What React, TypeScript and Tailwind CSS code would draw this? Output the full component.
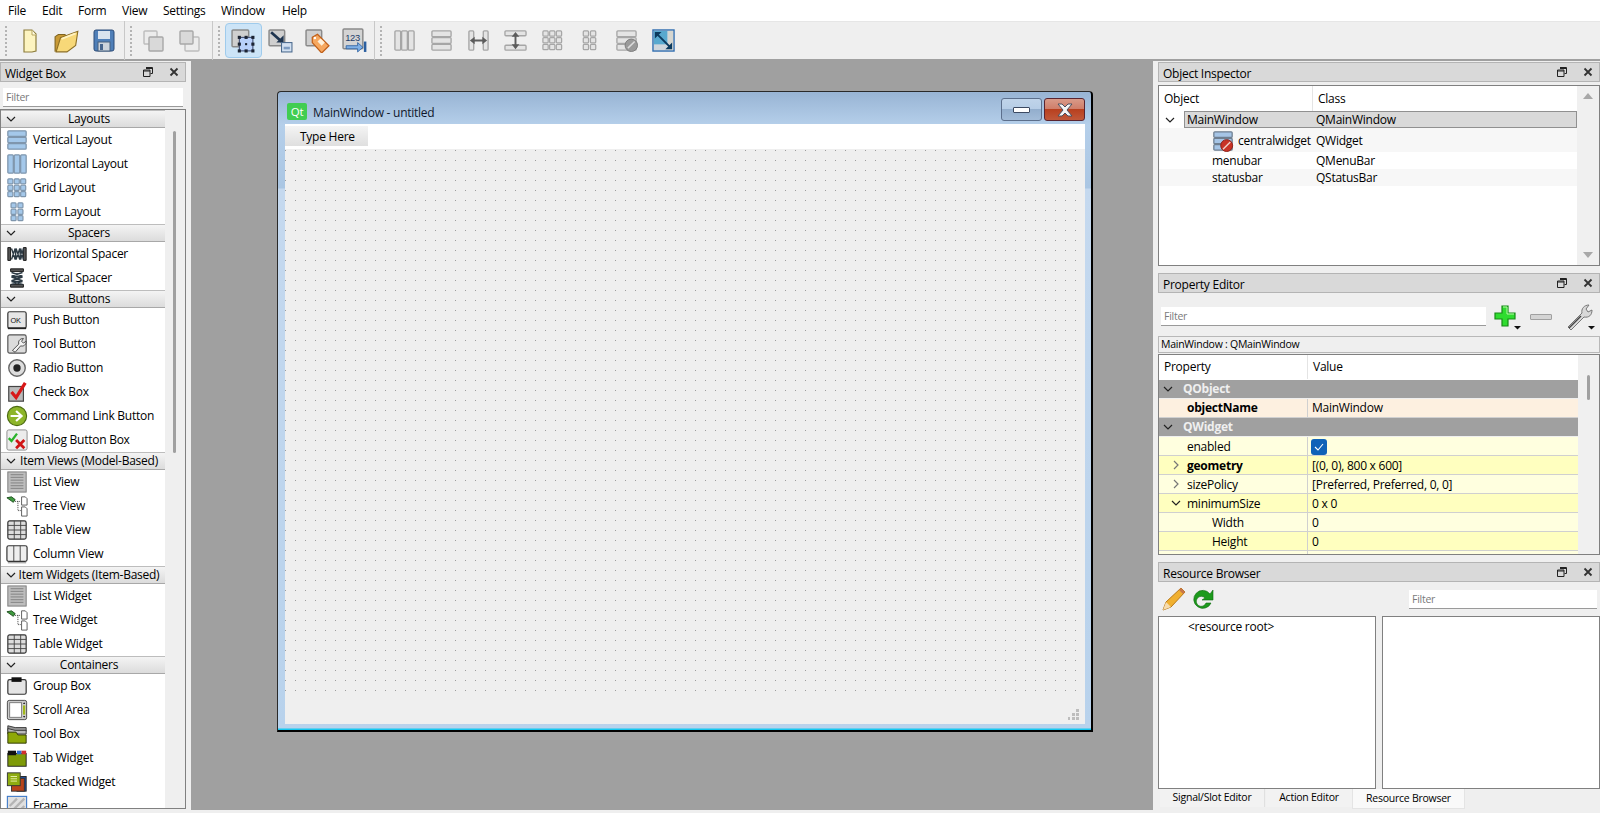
import type { ReactNode } from 'react'

function Ico({ s = 22, children, className = '' }: { s?: number; children: ReactNode; className?: string }) {
  return (
    <svg width={s} height={s} viewBox="0 0 24 24" className={`shrink-0 ${className}`}>
      {children}
    </svg>
  )
}

const BLUE = { f: '#a4c8ea', s: '#7f96ad' }
const GRAY = { f: '#e4e4e4', s: '#a6a6a6' }

function VBars({ f, s }: { f: string; s: string }) {
  return (
    <>
      {[2, 9, 16].map((y) => (
        <rect key={y} x="2" y={y} width="20" height="6" rx="1" fill={f} stroke={s} strokeWidth="1.4" />
      ))}
    </>
  )
}
function HBars({ f, s }: { f: string; s: string }) {
  return (
    <>
      {[2, 9, 16].map((x) => (
        <rect key={x} x={x} y="2" width="6" height="20" rx="1" fill={f} stroke={s} strokeWidth="1.4" />
      ))}
    </>
  )
}
function Cells({ f, s, cols }: { f: string; s: string; cols: number[] }) {
  return (
    <>
      {cols.map((x) =>
        [2, 9, 16].map((y) => (
          <rect key={`${x}-${y}`} x={x} y={y} width="5.5" height="5.5" rx="1" fill={f} stroke={s} strokeWidth="1.3" />
        ))
      )}
    </>
  )
}

function Sq({ x, y, w = 15, f = '#cfcfcf', s = '#8a8a8a' }: { x: number; y: number; w?: number; f?: string; s?: string }) {
  return <rect x={x} y={y} width={w} height={w} fill={f} stroke={s} strokeWidth="1.4" rx="1" />
}

const toolbarA = [
  <Ico key="new" s={24}>
    <path d="M6 1h8l4 4v17l-4 1H6z" fill="#fdf4c0" stroke="#8d7d3c" strokeWidth="1.2" />
    <path d="M14 1v5h4" fill="#fffbe4" stroke="#b9a860" />
  </Ico>,
  <Ico key="open" s={26}>
    <path d="M1 22V8l3-2h6l2 2h7v4" fill="#c99a35" stroke="#7f6420" />
    <path d="M2 22l4-13 16-6-2 13-8 6z" fill="#f7d878" stroke="#8c6e24" />
    <path d="M7 10l13-5" stroke="#fff2c0" strokeWidth="1.6" />
  </Ico>,
  <Ico key="save" s={24}>
    <rect x="2" y="1" width="20" height="21" rx="2" fill="#4f7fb8" stroke="#2c4c78" />
    <rect x="6" y="2" width="12" height="8" fill="#d9e3ee" />
    <rect x="6" y="13" width="12" height="9" fill="#ccd3db" stroke="#47607f" />
    <rect x="8" y="15" width="3" height="6" fill="#46648c" />
  </Ico>,
]

const toolbarB = [
  <Ico key="b" s={24}>
    <Sq x={2} y={2} w={13} f="#ececec" s="#bdbdbd" />
    <Sq x={7} y={8} w={14} f="#d9d9d9" s="#a8a8a8" />
  </Ico>,
  <Ico key="f" s={24}>
    <Sq x={7} y={8} w={14} f="#ececec" s="#bdbdbd" />
    <Sq x={2} y={2} w={13} f="#d9d9d9" s="#a8a8a8" />
  </Ico>,
]

const toolbarC = [
  <Ico key="edit" s={25}>
    <Sq x={1} y={2} w={16} />
    <rect x="8" y="9" width="13" height="13" fill="#b8d0fa" stroke="#3c4a70" />
    {[[6.5, 7.5], [19.5, 7.5], [6.5, 20.5], [19.5, 20.5], [13, 7.5], [6.5, 14], [19.5, 14], [13, 20.5]].map(([x, y]) => (
      <rect key={`${x}-${y}`} x={x} y={y} width="3" height="3" fill="#1c2433" />
    ))}
    <rect x="13.5" y="14.5" width="2" height="2" fill="#1c2433" />
  </Ico>,
  <Ico key="sig" s={25}>
    <Sq x={1} y={2} w={15} />
    <path d="M3 4l10 9" stroke="#1f3550" strokeWidth="2.6" />
    <path d="M8 14h7V7z" fill="#1f3550" />
    <rect x="13" y="14" width="10" height="9" fill="#d3e1f2" stroke="#48688c" />
    <rect x="15" y="18" width="6" height="2.5" fill="#7d9cc2" />
  </Ico>,
  <Ico key="bud" s={25}>
    <Sq x={1} y={2} w={15} />
    <path d="M7 9l5-3 11 11-7 7L7 14z" fill="#f6a860" stroke="#c05f18" strokeWidth="1.2" />
    <path d="M12 13l4 4 3-3-4-4z" fill="#fff1dc" />
    <circle cx="9.5" cy="9.5" r="1.2" fill="#fff" />
  </Ico>,
  <Ico key="tab" s={25}>
    <Sq x={1} y={1} w={19} f="#d4d4d4" />
    <text x="3" y="12" fontSize="9" fontFamily="Liberation Sans" fill="#1e3c68">123</text>
    <path d="M4 17h11v-3l5 4.500-5 4.500v-3H4z" fill="#7fb0e6" stroke="#2b5fa0" strokeWidth=".8" />
    <rect x="21" y="13" width="2.400" height="10" fill="#2b5fa0" />
  </Ico>,
]

const toolbarD = [
  <Ico key="hl" s={23}><HBars {...GRAY} /></Ico>,
  <Ico key="vl" s={23}><VBars {...GRAY} /></Ico>,
  <Ico key="hs" s={23}>
    <rect x="2" y="2" width="5" height="20" rx="1" fill={GRAY.f} stroke={GRAY.s} strokeWidth="1.4" />
    <rect x="17" y="2" width="5" height="20" rx="1" fill={GRAY.f} stroke={GRAY.s} strokeWidth="1.4" />
    <path d="M3 12l5-4v3h8V8l5 4-5 4v-3H8v3z" fill="#5c5c5c" />
  </Ico>,
  <Ico key="vs" s={23}>
    <rect x="1" y="2" width="22" height="5" rx="1" fill={GRAY.f} stroke={GRAY.s} strokeWidth="1.4" />
    <rect x="1" y="17" width="22" height="5" rx="1" fill={GRAY.f} stroke={GRAY.s} strokeWidth="1.4" />
    <path d="M12 3l4 5h-3v8h3l-4 5-4-5h3V8H8z" fill="#5c5c5c" />
  </Ico>,
  <Ico key="gr" s={23}><Cells {...GRAY} cols={[2, 9, 16]} /></Ico>,
  <Ico key="fo" s={23}><Cells {...GRAY} cols={[5.500, 13]} /></Ico>,
  <Ico key="br" s={23}>
    <VBars {...GRAY} />
    <circle cx="17" cy="17" r="6.500" fill="#9a9a9a" stroke="#7c7c7c" />
    <path d="M13.500 20l7-7" stroke="#dcdcdc" strokeWidth="1.600" />
  </Ico>,
  <Ico key="ad" s={23}>
    <rect x="1" y="1" width="22" height="22" fill="#cfd6dc" stroke="#2f6db0" strokeWidth="1.400" />
    <rect x="2" y="2" width="14" height="14" fill="#58a9cf" />
    <rect x="17" y="2" width="5" height="20" fill="#d6d6d0" />
    <path d="M4 4l16 16" stroke="#0b3a5e" strokeWidth="2" />
    <path d="M3 3h7l-7 7zM21 21h-7l7-7z" fill="#0b3a5e" />
  </Ico>,
]

function Grip() {
  return <div className="w-[2px] h-[30px] mx-[2px] border-l-2 border-dotted border-[#b4b4b4] shrink-0" />
}
function Sep() {
  return <div className="w-px h-[39px] bg-[#c8c8c8] shrink-0" />
}

function Toolbar() {
  return (
    <div className="h-[40px] flex items-center bg-[#efefef] border-b-2 border-[#a0a0a0] border-t border-t-[#e6e6e6] shrink-0">
      <div className="w-[3px]" />
      <Grip />
      <div className="w-[9px]" />
      <div className="w-[24px] flex justify-center">{toolbarA[0]}</div>
      <div className="w-[13px]" />
      <div className="w-[24px] flex justify-center">{toolbarA[1]}</div>
      <div className="w-[13px]" />
      <div className="w-[24px] flex justify-center">{toolbarA[2]}</div>
      <div className="w-[8px]" />
      <Sep />
      <div className="w-[3px]" />
      <Grip />
      <div className="w-[8px]" />
      {toolbarB[0]}
      <div className="w-[12px]" />
      {toolbarB[1]}
      <div className="w-[10px]" />
      <Sep />
      <div className="w-[3px]" />
      <Grip />
      <div className="w-[3px]" />
      <div className="w-[37px] h-[35px] flex items-center justify-center rounded-sm bg-[#cce4f7] border border-[#9fcbec] shrink-0">{toolbarC[0]}</div>
      <div className="w-[6px]" />
      {toolbarC[1]}
      <div className="w-[12px]" />
      {toolbarC[2]}
      <div className="w-[12px]" />
      {toolbarC[3]}
      <div className="w-[7px]" />
      <Sep />
      <div className="w-[3px]" />
      <Grip />
      <div className="w-[9px]" />
      <div className="flex gap-[14px] items-center">{toolbarD}</div>
    </div>
  )
}

function FloatClose() {
  return (
    <div className="flex items-center shrink-0">
      <svg width="10" height="10" viewBox="0 0 10 10" className="mr-[16px]">
        <path d="M3 .5h6.500v6h-2M.5 3h6.500v6.500H.5z" fill="none" stroke="#222" />
        <path d="M3 1.500h6.500M.5 4h6.500" stroke="#222" />
      </svg>
      <svg width="10" height="10" viewBox="0 0 10 10" className="mr-[5px]">
        <path d="M1.500 1.500l7 7M8.500 1.500l-7 7" stroke="#333" strokeWidth="1.800" />
      </svg>
    </div>
  )
}

function DockTitle({ title }: { title: string }) {
  return (
    <div className="h-[20px] flex items-center justify-between bg-[#d9d9d9] border border-[#b4b4b4] pl-[4px] pr-[1px] text-[12px] shrink-0">
      <span className="pt-[3px]">{title}</span>
      <FloatClose />
    </div>
  )
}

function Chevron({ open = true, className = '' }: { open?: boolean; className?: string }) {
  return (
    <svg width="10" height="10" viewBox="0 0 10 10" className={`shrink-0 ${className}`}>
      <path d={open ? 'M1 3l4 4 4-4' : 'M3 1l4 4-4 4'} fill="none" stroke="currentColor" strokeWidth="1.200" />
    </svg>
  )
}

function FilterBox({ className = '' }: { className?: string }) {
  return (
    <div className={`h-[19px] flex items-center bg-white border-b border-[#9a9a9a] pl-[3px] pt-[1px] text-[10.500px] text-[#7a7a7a] ${className}`}>
      Filter
    </div>
  )
}

const listLines = (
  <>
    <rect x="2" y="1" width="20" height="22" fill="#bdbdbd" stroke="#777" />
    {[4, 7, 10, 13, 16, 19].map((y) => (
      <path key={y} d={`M5 ${y}h14`} stroke="#8c8c8c" strokeWidth="1.300" />
    ))}
  </>
)
const treeIcon = (
  <>
    <path d="M1 3l5-1 4 3-2 3z" fill="#3f9a3f" stroke="#1d4d1d" />
    <path d="M10 7h6M13 7v10h3" stroke="#333" strokeDasharray="1 1" fill="none" />
    <path d="M17 2h4l2 2v7h-6zM17 13h4l2 2v8h-6z" fill="#fff" stroke="#555" />
  </>
)
const tableIcon = (
  <>
    <rect x="2" y="2" width="20" height="20" rx="2" fill="#ddd" stroke="#333" strokeWidth="1.300" />
    <path d="M2 7h20M2 12h20M2 17h20M9 2v20M16 2v20" stroke="#444" />
  </>
)

const sections: { title: string; items: [string, ReactNode][] }[] = [
  {
    title: 'Layouts',
    items: [
      ['Vertical Layout', <VBars key="a" {...BLUE} />],
      ['Horizontal Layout', <HBars key="a" {...BLUE} />],
      ['Grid Layout', <Cells key="a" {...BLUE} cols={[2, 9, 16]} />],
      ['Form Layout', <Cells key="a" {...BLUE} cols={[5.500, 13]} />],
    ],
  },
  {
    title: 'Spacers',
    items: [
      [
        'Horizontal Spacer',
        <g key="a">
          <path d="M2 5h3v14H2zM19 5h3v14h-3z" fill="#555" stroke="#111" />
          <path d="M6 18L10 6l1 12 4-12 1 12 3-12M6 6l4 12 1-12 4 12 1-12 3 12" fill="none" stroke="#2c3a44" strokeWidth="1.500" />
        </g>,
      ],
      [
        'Vertical Spacer',
        <g key="a">
          <path d="M5 2h14v3H5zM5 19h14v3H5z" fill="#555" stroke="#111" />
          <path d="M18 6L6 10l12 1-12 4 12 1-12 3M6 6l12 4-12 1 12 4-12 1 12 3" fill="none" stroke="#2c3a44" strokeWidth="1.500" />
        </g>,
      ],
    ],
  },
  {
    title: 'Buttons',
    items: [
      [
        'Push Button',
        <g key="a">
          <rect x="2" y="3" width="20" height="18" rx="2" fill="#e6e6e6" stroke="#333" strokeWidth="1.300" />
          <path d="M2 21h20" stroke="#222" strokeWidth="2" />
          <text x="5" y="15" fontSize="8" fontFamily="Liberation Sans" fill="#111">OK</text>
        </g>,
      ],
      [
        'Tool Button',
        <g key="a">
          <rect x="2" y="2" width="20" height="20" rx="2" fill="#dcdcdc" stroke="#555" strokeWidth="1.300" />
          <path d="M7 19l7-7c-1-3 1-6 5-6l-2 3 2 2 3-2c0 4-3 6-6 5l-6 7z" fill="#f2f2f2" stroke="#444" />
        </g>,
      ],
      [
        'Radio Button',
        <g key="a">
          <circle cx="12" cy="12" r="9" fill="#ddd" stroke="#666" strokeWidth="1.500" />
          <circle cx="12" cy="12" r="4" fill="#222" />
        </g>,
      ],
      [
        'Check Box',
        <g key="a">
          <rect x="3" y="6" width="16" height="16" fill="#bbb" stroke="#444" strokeWidth="1.300" />
          <path d="M6 12l5 6L21 2" fill="none" stroke="#d81818" strokeWidth="3.500" />
        </g>,
      ],
      [
        'Command Link Button',
        <g key="a">
          <circle cx="12" cy="12" r="10.500" fill="#8db52a" stroke="#4b6a10" strokeWidth="1.200" />
          <path d="M5 12h11M11 6.500l6 5.500-6 5.500" fill="none" stroke="#fff" strokeWidth="2.400" />
        </g>,
      ],
      [
        'Dialog Button Box',
        <g key="a">
          <rect x="1" y="1" width="22" height="22" rx="2" fill="#ececec" stroke="#888" />
          <path d="M3 10l3 3 6-8" fill="none" stroke="#2bb32b" strokeWidth="2.500" />
          <path d="M11 12l9 9M20 12l-9 9" stroke="#d01616" strokeWidth="3" />
        </g>,
      ],
    ],
  },
  {
    title: 'Item Views (Model-Based)',
    items: [
      ['List View', listLines],
      ['Tree View', treeIcon],
      ['Table View', tableIcon],
      [
        'Column View',
        <g key="a">
          <rect x="1" y="3" width="22" height="17" rx="2" fill="#eee" stroke="#333" strokeWidth="1.300" />
          <path d="M8.500 3v17M15.500 3v17" stroke="#444" />
          <path d="M2 21.500h20" stroke="#aaa" strokeWidth="1.500" />
        </g>,
      ],
    ],
  },
  {
    title: 'Item Widgets (Item-Based)',
    items: [
      ['List Widget', listLines],
      ['Tree Widget', treeIcon],
      ['Table Widget', tableIcon],
    ],
  },
  {
    title: 'Containers',
    items: [
      [
        'Group Box',
        <g key="a">
          <rect x="2" y="5" width="20" height="16" rx="2" fill="#e4e4e4" stroke="#333" strokeWidth="1.300" />
          <rect x="6" y="2.500" width="11" height="5" fill="#111" />
        </g>,
      ],
      [
        'Scroll Area',
        <g key="a">
          <rect x="1.500" y="1.500" width="21" height="21" rx="2" fill="#ccc" stroke="#444" />
          <rect x="4" y="4" width="13" height="16" fill="#fff" stroke="#777" />
          <rect x="18.500" y="7" width="2.500" height="10" fill="#a2b81c" />
          <path d="M18.500 5.500l1.300-2 1.300 2zM18.500 18.500l1.300 2 1.300-2z" fill="#222" />
        </g>,
      ],
      [
        'Tool Box',
        <g key="a">
          <path d="M2 3l8 2h12v4H2z" fill="#999" stroke="#333" />
          <path d="M2 6l8 2h12v4H2z" fill="#bbb" stroke="#333" />
          <path d="M2 10h9l2 3h9v9H2z" fill="#8ea808" stroke="#2b3300" />
        </g>,
      ],
      [
        'Tab Widget',
        <g key="a">
          <rect x="2" y="7" width="20" height="14" fill="#7e9a08" stroke="#222" />
          <rect x="2" y="4" width="9" height="5" fill="#111" />
          <rect x="12" y="4" width="5" height="4" fill="#2f6fd0" />
          <rect x="17" y="4" width="5" height="4" fill="#d03030" />
        </g>,
      ],
      [
        'Stacked Widget',
        <g key="a">
          <rect x="12" y="6" width="10" height="16" fill="#1e4ea0" stroke="#222" />
          <rect x="6" y="8" width="14" height="14" fill="#b8431a" stroke="#333" />
          <rect x="1.500" y="2" width="14" height="14" fill="#8fac10" stroke="#333" />
          <path d="M5 6h7M5 8.500h7M5 11h7" stroke="#eef3b0" />
        </g>,
      ],
      [
        'Frame',
        <g key="a">
          <rect x="1.500" y="1.500" width="21" height="21" fill="#e0e0e0" stroke="#3c78c8" strokeWidth="1.200" />
          <path d="M4 20L20 4M4 12l8-8M12 20l8-8" stroke="#b4b4b4" strokeWidth="2.500" />
        </g>,
      ],
    ],
  },
]

function WidgetBox() {
  return (
    <div className="w-[191px] shrink-0 pt-[1px] pr-[5px] flex flex-col h-[748px]">
      <DockTitle title="Widget Box" />
      <FilterBox className="mt-[6px] mx-[3px]" />
      <div className="mt-[2px] flex-1 min-h-0 border border-[#808080] flex overflow-hidden">
        <div className="w-[164px] bg-white overflow-hidden shrink-0">
          {sections.map((sec) => (
            <div key={sec.title}>
              <div className="h-[18px] flex items-center bg-[linear-gradient(180deg,#f4f4f4,#dcdcdc)] border-b border-[#a8a8a8] border-t border-t-[#bdbdbd] text-[12px] leading-none relative">
                <Chevron className="ml-[5px] text-[#222]" />
                <span className="flex-1 text-center pr-[3px] whitespace-nowrap">{sec.title}</span>
              </div>
              {sec.items.map(([label, icon]) => (
                <div key={label} className="h-[24px] flex items-center text-[12px]">
                  <div className="w-[32px] pl-[5px] shrink-0">
                    <Ico>{icon}</Ico>
                  </div>
                  <span>{label}</span>
                </div>
              ))}
            </div>
          ))}
        </div>
        <div className="flex-1 bg-[#efefef] pl-[8px] pt-[21px]">
          <div className="w-[3px] h-[322px] bg-[#a0a0a0] rounded-full" />
        </div>
      </div>
    </div>
  )
}

function FormWindow() {
  return (
    <div className="ml-[86px] mt-[30px] w-[816px] h-[641px] rounded-t-[4px] border-t border-l border-[#2a2a2a] border-r-2 border-b-2 border-r-black border-b-black bg-[linear-gradient(180deg,#98b4d4_0,#b5cfea_33px,#aac6e3_96px,#c5d9ef_97px,#b8d2ec_100%)] pl-[7px] pt-[1px] shadow-[inset_0_-1.500px_0_#14c8f0]">
      <div className="h-[31px] w-[800px] flex items-start">
        <div className="w-[20px] h-[17px] mt-[10px] rounded-[2px] bg-[#41cd52] text-white text-[11.500px] leading-[17px] text-center ml-[2px] mr-[6px] font-medium">Qt</div>
        <span className="text-[12px] leading-[17px] mt-[11px] text-[#10182c]">MainWindow - untitled</span>
        <div className="ml-auto flex gap-[2px] items-center mt-[5px]">
          <div className="w-[41px] h-[23px] rounded-[3px] border border-[#5c6f8c] bg-[linear-gradient(180deg,#c0d4ea_0,#b6cde6_49%,#93aecd_50%,#a3bcd8_100%)] flex items-center justify-center">
            <div className="w-[17px] h-[6px] bg-white border border-[#3c4a62] rounded-[1px]" />
          </div>
          <div className="w-[41px] h-[23px] rounded-[3px] border border-[#5a2430] bg-[linear-gradient(180deg,#d99a88_0,#cf7c68_49%,#b8401f_50%,#c0583a_100%)] flex items-center justify-center">
            <svg width="20" height="14" viewBox="0 0 20 14">
              <path d="M3 1h4l3 3 3-3h4l-5 6 5 6h-4l-3-3-3 3H3l5-6z" fill="#f4f4f4" stroke="#4a5060" />
            </svg>
          </div>
        </div>
      </div>
      <div className="w-[800px] h-[25px] bg-white pt-[2px] text-[12px]">
        <div className="w-[83px] h-[20px] bg-[linear-gradient(180deg,#f4f4f4,#dfdfdf)] flex items-center pl-[15px] pt-[1px]">Type Here</div>
      </div>
      <div className="w-[800px] h-[575px] bg-[#efefef] relative">
        <div className="w-[795px] h-[545px] bg-[radial-gradient(circle_at_0.500px_0.500px,#9c9c9c_0.750px,transparent_0.750px)] bg-[size:10px_10px] bg-[position:0_1px]" />
        <svg width="15" height="14" viewBox="0 0 15 14" className="absolute right-[3px] bottom-[2px]">
          <path d="M9 1h3v3H9zM5 5h3v3H5zM9 5h3v3H9zM1 9h2v3H1zM5 9h3v3H5zM9 9h3v3H9z" fill="#bdbdbd" />
        </svg>
      </div>
    </div>
  )
}

function ObjectInspector() {
  const rows = [
    { name: 'centralwidget', cls: 'QWidget', h: 'h-[24px] pt-[1px]', bg: 'bg-[#f7f7f7]', icon: true },
    { name: 'menubar', cls: 'QMenuBar', h: 'h-[17px]', bg: 'bg-white', icon: false },
    { name: 'statusbar', cls: 'QStatusBar', h: 'h-[17px]', bg: 'bg-[#f7f7f7]', icon: false },
  ]
  return (
    <>
      <DockTitle title="Object Inspector" />
      <div className="mt-[3px] h-[181px] border border-[#808080] bg-white flex shrink-0 text-[12px]">
        <div className="w-[418px] shrink-0">
          <div className="h-[25px] flex">
            <div className="w-[154px] pl-[5px] pt-[1px] flex items-center border-r border-[#e4e4e4]">Object</div>
            <div className="pl-[5px] pt-[1px] flex items-center">Class</div>
          </div>
          <div className="h-[17px] flex items-center">
            <Chevron className="ml-[6px] mr-[9px] text-[#222]" />
            <div className="flex-1 h-[17px] flex items-center bg-[#d9d9d9] border border-[#909090] pl-[2px]">
              <span className="w-[129px]">MainWindow</span>
              <span>QMainWindow</span>
            </div>
          </div>
          {rows.map((r) => (
            <div key={r.name} className={`${r.h} ${r.bg} flex items-center`}>
              {r.icon ? (
                <div className="w-[75px] shrink-0 flex justify-end">
                  <Ico>
                    <VBars f="#a6c5e6" s="#6f7f90" />
                    <circle cx="16" cy="17" r="6.500" fill="#c83226" stroke="#8a1a12" />
                    <path d="M12 21l8-8" stroke="#f0d0c8" strokeWidth="1.600" />
                  </Ico>
                </div>
              ) : (
                <div className="w-[53px] shrink-0" />
              )}
              <div className={`shrink-0 ${r.icon ? 'w-[82px] pl-[4px]' : 'w-[104px]'}`}>{r.name}</div>
              <span>{r.cls}</span>
            </div>
          ))}
        </div>
        <div className="flex-1 flex flex-col items-center justify-between py-[7px] bg-[#f0f0f0]">
          <div className="w-0 h-0 border-x-[5px] border-x-transparent border-b-[6px] border-b-[#a8a8a8]" />
          <div className="w-0 h-0 border-x-[5px] border-x-transparent border-t-[6px] border-t-[#a8a8a8]" />
        </div>
      </div>
    </>
  )
}

type PropRow = { name: string; value?: ReactNode; bg: string; bold?: boolean; section?: boolean; arrow?: 'open' | 'closed'; indent?: boolean }

const propRows: PropRow[] = [
  { name: 'QObject', bg: 'bg-[#a0a0a0]', section: true },
  { name: 'objectName', value: 'MainWindow', bg: 'bg-[#fdf0e0]', bold: true },
  { name: 'QWidget', bg: 'bg-[#a0a0a0]', section: true },
  {
    name: 'enabled',
    bg: 'bg-[#ffffdf]',
    value: (
      <div className="w-[16px] h-[16px] rounded-[3px] bg-[#0f62b8] flex items-center justify-center -ml-[1px]">
        <svg width="10" height="8" viewBox="0 0 10 8">
          <path d="M1 4l3 3 5-6" fill="none" stroke="#fff" strokeWidth="1.100" />
        </svg>
      </div>
    ),
  },
  { name: 'geometry', value: '[(0, 0), 800 x 600]', bg: 'bg-[#ffffbf]', bold: true, arrow: 'closed' },
  { name: 'sizePolicy', value: '[Preferred, Preferred, 0, 0]', bg: 'bg-[#ffffdf]', arrow: 'closed' },
  { name: 'minimumSize', value: '0 x 0', bg: 'bg-[#ffffbf]', arrow: 'open' },
  { name: 'Width', value: '0', bg: 'bg-[#ffffdf]', indent: true },
  { name: 'Height', value: '0', bg: 'bg-[#ffffbf]', indent: true },
  { name: '', bg: 'bg-[#ffffdf]' },
]

function PropertyEditor() {
  return (
    <>
      <div className="mt-[7px]">
        <DockTitle title="Property Editor" />
      </div>
      <div className="h-[43px] pt-[4px] flex items-center shrink-0">
        <FilterBox className="w-[325px] ml-[3px]" />
        <svg width="28" height="26" viewBox="0 0 28 26" className="ml-[7px]">
          <path d="M9 2h6v7h7v6h-7v7H9v-7H2V9h7z" fill="#2fdc2f" stroke="#178a17" strokeWidth="1.200" />
          <path d="M10 3h4v7h7" fill="none" stroke="#b6f7a8" />
          <path d="M21 22h7l-3.500 3.500z" fill="#111" />
        </svg>
        <div className="w-[22px] h-[6px] ml-[9px] bg-[#d4d4d4] border border-[#a0a0a0] rounded-[1px]" />
        <svg width="30" height="28" viewBox="0 0 30 28" className="ml-[13px]">
          <path d="M3 24L17 10c-1-4 2-8 7-8l-3 4 2 3 4-2c0 5-3 8-8 7L6 27z" fill="#d8d8d8" stroke="#777" />
          <path d="M4 25L16 13" stroke="#444" strokeWidth="1.500" />
          <path d="M23 23h7l-3.500 3.500z" fill="#111" />
        </svg>
      </div>
      <div className="h-[17px] flex items-center border border-[#b8b8b8] pl-[2px] text-[10.500px] shrink-0">MainWindow : QMainWindow</div>
      <div className="mt-[1px] h-[201px] border border-[#808080] bg-white flex overflow-hidden shrink-0 text-[12px]">
        <div className="w-[419px] shrink-0">
          <div className="h-[24px] mb-[1px] flex">
            <div className="w-[149px] pl-[5px] flex items-center border-r border-[#e4e4e4]">Property</div>
            <div className="pl-[5px] flex items-center">Value</div>
          </div>
          {propRows.map((r, i) =>
            r.section ? (
              <div key={i} className={`h-[19px] flex items-center ${r.bg} text-[#efefef] font-bold border-b border-[#efefef]`}>
                <Chevron className="ml-[4px] mr-[9px] text-[#222]" />
                <span className="pl-[1px]">{r.name}</span>
              </div>
            ) : (
              <div key={i} className={`h-[19px] flex items-center ${r.bg} border-b border-[#d0d0d0]`}>
                <div className="w-[149px] h-full flex items-center border-r border-[#d0d0d0] shrink-0">
                  <div className="w-[28px] shrink-0">
                    {r.arrow && <Chevron open={r.arrow === 'open'} className={`ml-[12px] ${r.arrow === 'open' ? 'text-[#222]' : 'text-[#777]'}`} />}
                  </div>
                  <span className={`${r.bold ? 'font-bold' : ''} ${r.indent ? 'pl-[25px]' : ''} ${i > 2 ? 'pt-[1px]' : ''}`}>{r.name}</span>
                </div>
                <div className={`pl-[4px] ${i > 2 ? 'pt-[1px]' : ''}`}>{r.value}</div>
              </div>
            )
          )}
        </div>
        <div className="flex-1 bg-[#f0f0f0] pl-[9px] pt-[20px]">
          <div className="w-[3px] h-[25px] bg-[#a0a0a0] rounded-full" />
        </div>
      </div>
    </>
  )
}

function ResourceBrowser() {
  return (
    <>
      <div className="mt-[7px]">
        <DockTitle title="Resource Browser" />
      </div>
      <div className="h-[34px] flex items-center shrink-0">
        <svg width="24" height="24" viewBox="0 0 24 24" className="ml-[4px]">
          <path d="M1 23l3-8L19 1l4 4L9 20z" fill="#f0b030" stroke="#b87818" />
          <path d="M1 23l3-8 5 5z" fill="#f6dcae" />
          <path d="M17 3l4 4 2-2-4-4z" fill="#c8764a" />
        </svg>
        <svg width="22" height="22" viewBox="0 0 22 22" className="ml-[6px]">
          <path d="M18 6A9 9 0 1 0 19 15h-5a5 5 0 1 1-1-5l-3 2h11V2z" fill="#1c9a1c" stroke="#0f6a0f" strokeWidth=".6" />
        </svg>
        <FilterBox className="w-[188px] ml-auto mr-[3px] mt-[1px]" />
      </div>
      <div className="h-[173px] flex gap-[6px] shrink-0 text-[12px]">
        <div className="w-[218px] border border-[#808080] bg-white pl-[29px] pt-[1px]">&lt;resource root&gt;</div>
        <div className="flex-1 border border-[#808080] bg-white" />
      </div>
      <div className="h-[20px] flex items-start pl-[2px] text-[10.500px] shrink-0">
        <div className="w-[105px] h-[18px] flex items-center justify-center bg-[#f2f2f2] border-r border-[#e0e0e0]">Signal/Slot Editor</div>
        <div className="w-[86px] h-[18px] flex items-center justify-center bg-[#f2f2f2] ml-[1px]">Action Editor</div>
        <div className="w-[113px] h-[20px] flex items-center justify-center bg-[#f9f9f9] border border-t-0 border-[#e4e4e4]">Resource Browser</div>
      </div>
    </>
  )
}

export default function App() {
  return (
    <div className="w-[1600px] h-[813px] overflow-hidden bg-[#efefef] text-black flex flex-col font-['Open_Sans','Liberation_Sans',sans-serif] tracking-[-0.25px]">
      <div className="h-[21px] bg-white flex items-center pl-[8px] text-[12px] shrink-0">
        <span className="w-[34px]">File</span>
        <span className="w-[36px]">Edit</span>
        <span className="w-[44px]">Form</span>
        <span className="w-[41px]">View</span>
        <span className="w-[58px]">Settings</span>
        <span className="w-[61px]">Window</span>
        <span>Help</span>
      </div>
      <Toolbar />
      <div className="flex flex-1 min-h-0">
        <WidgetBox />
        <div className="w-[962px] h-[749px] shrink-0 bg-[#a0a0a0] overflow-hidden">
          <FormWindow />
        </div>
        <div className="flex-1 pl-[5px] pt-[1px] flex flex-col">
          <ObjectInspector />
          <PropertyEditor />
          <ResourceBrowser />
        </div>
      </div>
    </div>
  )
}
